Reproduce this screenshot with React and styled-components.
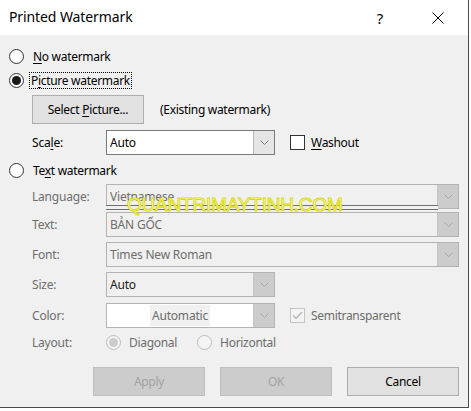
import styled, { createGlobalStyle } from "styled-components";

const Global = createGlobalStyle`
  html, body { margin: 0; padding: 0; background: #ffffff; }
  body { font-family: "Noto Sans", "Open Sans", sans-serif; font-size: 12px; color: #000; }
`;

const Dialog = styled.div`
  width: 468px;
  height: 407px;
  border-right: 1px solid #4a4a4a;
  border-bottom: 1px solid #4a4a4a;
  background: #f0f0f0;
  display: flex;
  flex-direction: column;
  position: relative;
  overflow: hidden;
`;

const TitleBar = styled.div`
  height: 35px;
  background: #ffffff;
  display: flex;
  align-items: center;
  padding-left: 9px;
  font-size: 14px;
  letter-spacing: -0.1px;
`;

const Title = styled.div`
  flex: 1;
  padding-bottom: 2px;
`;

const TitleButton = styled.div`
  width: 46px;
  height: 35px;
  display: flex;
  align-items: center;
  justify-content: center;
  font-size: 15px;
  color: #000;
  margin-right: ${({ $mr }) => $mr || 0}px;
`;

const Body = styled.div`
  display: flex;
  flex-direction: column;
  padding-left: 9px;
`;

const Row = styled.div`
  display: flex;
  align-items: center;
  height: ${({ $h }) => $h}px;
  margin-top: ${({ $mt }) => $mt}px;
  padding-left: ${({ $pl }) => $pl || 0}px;
`;

const RadioCircle = styled.span`
  box-sizing: border-box;
  width: 15px;
  height: 15px;
  border-radius: 50%;
  border: 1px solid ${({ $disabled }) => ($disabled ? "#bcbcbc" : "#333333")};
  background: ${({ $disabled }) => ($disabled ? "#f4f4f4" : "#ffffff")};
  display: flex;
  align-items: center;
  justify-content: center;
  flex-shrink: 0;
  margin-left: ${({ $ml }) => $ml || 0}px;
  &::after {
    content: "";
    display: ${({ $checked }) => ($checked ? "block" : "none")};
    width: 9px;
    height: 9px;
    border-radius: 50%;
    background: ${({ $disabled }) => ($disabled ? "#cccccc" : "#1a1a1a")};
  }
`;

const RadioLabel = styled.span`
  margin-left: ${({ $ml }) => $ml || 7}px;
  color: ${({ $disabled }) => ($disabled ? "#6d6d6d" : "#000")};
  padding: 0 1px;
  line-height: 15px;
  border: 1px dotted ${({ $focus }) => ($focus ? "#000" : "transparent")};
  letter-spacing: -0.3px;
`;

const Key = styled.span`
  text-decoration: underline;
  text-underline-offset: 2px;
`;

const PushButton = styled.div`
  box-sizing: border-box;
  width: ${({ $w }) => $w || 112}px;
  height: 29px;
  display: flex;
  align-items: center;
  justify-content: center;
  background: ${({ $disabled }) => ($disabled ? "#cccccc" : "#e1e1e1")};
  border: 1px solid ${({ $disabled }) => ($disabled ? "#bfbfbf" : "#adadad")};
  color: ${({ $disabled }) => ($disabled ? "#a3a3a3" : "#000")};
  letter-spacing: -0.3px;
  margin-right: ${({ $mr }) => $mr || 0}px;
`;

const Hint = styled.span`
  margin-left: 16px;
  letter-spacing: -0.3px;
`;

const Label = styled.span`
  width: 74px;
  flex-shrink: 0;
  color: ${({ $disabled }) => ($disabled ? "#6d6d6d" : "#000")};
  letter-spacing: -0.2px;
`;

const Select = styled.div`
  box-sizing: border-box;
  width: ${({ $w }) => $w}px;
  height: 25px;
  display: flex;
  border: 1px solid ${({ $disabled }) => ($disabled ? "#b3b3b3" : "#7a7a7a")};
  background: ${({ $bg }) => $bg};
`;

const SelectValue = styled.div`
  flex: 1;
  display: flex;
  align-items: center;
  justify-content: ${({ $center }) => ($center ? "center" : "flex-start")};
  padding-left: ${({ $center }) => ($center ? 0 : 3)}px;
  color: ${({ $color }) => $color || "#000"};
  letter-spacing: -0.2px;
  overflow: hidden;
`;

const Highlight = styled.span`
  background: #f0f0f0;
  padding: 2px 2px;
  color: #6d6d6d;
`;

const DropButton = styled.div`
  box-sizing: border-box;
  width: 21px;
  display: flex;
  align-items: center;
  justify-content: center;
  background: ${({ $disabled }) => ($disabled ? "#cccccc" : "#e5e5e5")};
  border-left: 1px solid ${({ $disabled }) => ($disabled ? "#c4c4c4" : "#b8b8b8")};
`;

const Check = styled.span`
  box-sizing: border-box;
  width: 15px;
  height: 15px;
  border: 1px solid ${({ $disabled }) => ($disabled ? "#c4c4c4" : "#333333")};
  background: ${({ $disabled }) => ($disabled ? "#f4f4f4" : "#ffffff")};
  margin-left: 15px;
  display: flex;
  align-items: center;
  justify-content: center;
  flex-shrink: 0;
`;

const CheckText = styled.span`
  margin-left: 6px;
  color: ${({ $disabled }) => ($disabled ? "#6d6d6d" : "#000")};
  letter-spacing: -0.3px;
`;

const Footer = styled.div`
  display: flex;
  margin-top: 16px;
  padding-left: 84px;
`;

const Overlay = styled.div`
  position: absolute;
  left: 106px;
  top: 193px;
  width: 332px;
  height: 24px;
  pointer-events: none;
`;

const OverlayLines = styled.div`
  position: absolute;
  left: 0;
  right: 0;
  top: 12px;
  height: 3px;
  border-top: 1px solid #707070;
  border-bottom: 1px solid #707070;
  background: #f0f0f0;
`;

const OverlayText = styled.div`
  position: absolute;
  left: 21px;
  top: 1px;
  font-family: "Liberation Sans", Arial, sans-serif;
  font-size: 19px;
  line-height: 22px;
  color: #ffffff;
  -webkit-text-stroke: 1px #dcdc00;
  letter-spacing: -0.2px;
  white-space: nowrap;
`;

const Chevron = ({ disabled }) => (
  <svg width="9" height="5" viewBox="0 0 9 5">
    <path d="M0.5 0.5 L4.5 4.5 L8.5 0.5" fill="none" stroke={disabled ? "#a8a8a8" : "#7a7a7a"} strokeWidth="1" />
  </svg>
);

const CheckMark = () => (
  <svg width="11" height="9" viewBox="0 0 11 9">
    <path d="M1 4.5 L4 7.5 L10 1" fill="none" stroke="#b0b0b0" strokeWidth="1.2" />
  </svg>
);

function Combo({ w, value, disabled, bg, color, center, highlight }) {
  return (
    <Select $w={w} $disabled={disabled} $bg={bg}>
      <SelectValue $color={color} $center={center}>
        {highlight ? <Highlight>{value}</Highlight> : value}
      </SelectValue>
      <DropButton $disabled={disabled}>
        <Chevron disabled={disabled} />
      </DropButton>
    </Select>
  );
}

export default function App() {
  return (
    <>
      <Global />
      <Dialog>
        <TitleBar>
          <Title>Printed Watermark</Title>
          <TitleButton $mr={12}>?</TitleButton>
          <TitleButton $mr={7}>
            <svg width="12" height="12" viewBox="0 0 12 12">
              <path d="M0.5 0.5 L11.5 11.5 M11.5 0.5 L0.5 11.5" stroke="#000" strokeWidth="1" />
            </svg>
          </TitleButton>
        </TitleBar>
        <Body>
          <Row $h={18} $mt={12}>
            <RadioCircle />
            <RadioLabel><Key>N</Key>o watermark</RadioLabel>
          </Row>
          <Row $h={18} $mt={6}>
            <RadioCircle $checked />
            <RadioLabel $focus $ml={5}>P<Key>i</Key>cture watermark</RadioLabel>
          </Row>
          <Row $h={29} $mt={6} $pl={23}>
            <PushButton>
              <span>Select <Key>P</Key>icture...</span>
            </PushButton>
            <Hint>(Existing watermark)</Hint>
          </Row>
          <Row $h={25} $mt={6} $pl={23}>
            <Label>Sca<Key>l</Key>e:</Label>
            <Combo w={169} value="Auto" bg="#ffffff" />
            <Check />
            <CheckText><Key>W</Key>ashout</CheckText>
          </Row>
          <Row $h={18} $mt={6}>
            <RadioCircle />
            <RadioLabel>Te<Key>x</Key>t watermark</RadioLabel>
          </Row>
          <Row $h={25} $mt={5} $pl={23}>
            <Label $disabled>Language:</Label>
            <Combo w={353} value="Vietnamese" disabled bg="#f0f0f0" color="#6d6d6d" />
          </Row>
          <Row $h={25} $mt={3} $pl={23}>
            <Label $disabled>Text:</Label>
            <Combo w={353} value="BẢN GỐC" disabled bg="#f0f0f0" color="#6d6d6d" />
          </Row>
          <Row $h={25} $mt={5} $pl={23}>
            <Label $disabled>Font:</Label>
            <Combo w={353} value="Times New Roman" disabled bg="#f0f0f0" color="#6d6d6d" />
          </Row>
          <Row $h={25} $mt={5} $pl={23}>
            <Label $disabled>Size:</Label>
            <Combo w={169} value="Auto" disabled bg="#f0f0f0" color="#1a1a1a" />
          </Row>
          <Row $h={25} $mt={6} $pl={23}>
            <Label $disabled>Color:</Label>
            <Combo w={169} value="Automatic" disabled bg="#ffffff" center highlight />
            <Check $disabled>
              <CheckMark />
            </Check>
            <CheckText $disabled>Semitransparent</CheckText>
          </Row>
          <Row $h={18} $mt={5} $pl={23}>
            <Label $disabled>Layout:</Label>
            <RadioCircle $checked $disabled />
            <RadioLabel $disabled $ml={6}>Diagonal</RadioLabel>
            <RadioCircle $disabled $ml={18} />
            <RadioLabel $disabled $ml={6}>Horizontal</RadioLabel>
          </Row>
          <Footer>
            <PushButton $disabled $mr={15}>Apply</PushButton>
            <PushButton $disabled $mr={15}>OK</PushButton>
            <PushButton>Cancel</PushButton>
          </Footer>
        </Body>
        <Overlay>
          <OverlayLines />
          <OverlayText>QUANTRIMAYTINH.COM</OverlayText>
        </Overlay>
      </Dialog>
    </>
  );
}
